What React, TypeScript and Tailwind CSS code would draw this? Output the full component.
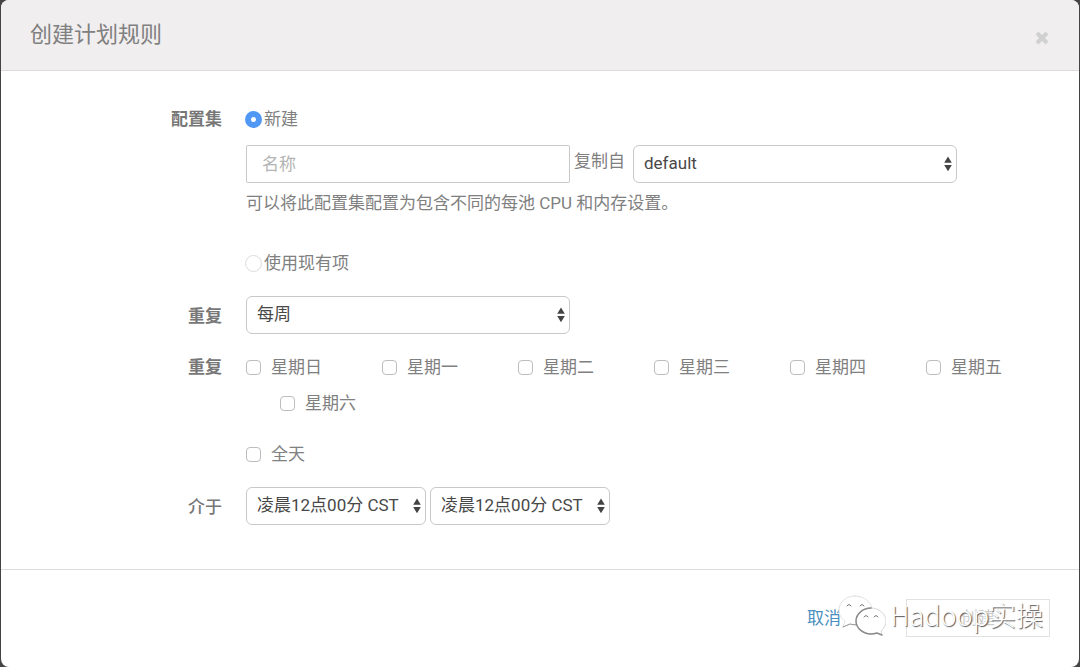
import { useState } from 'react';
import type { ReactNode } from 'react';

const weekdays = ['星期日', '星期一', '星期二', '星期三', '星期四', '星期五', '星期六'];
const times = ['凌晨12点00分 CST', '凌晨1点00分 CST', '凌晨2点00分 CST', '凌晨3点00分 CST'];

interface SelectBoxProps {
  id: string;
  label?: string;
  options: string[];
  className: string;
}

const SelectBox = ({ id, label, options, className }: SelectBoxProps) => (
  <div className={`relative ${className}`}>
    <select
      id={id}
      aria-label={label}
      className="h-[38px] w-full appearance-none rounded-md border border-[#c8c8c8] bg-white pr-6 pb-0.5 pl-2.5 text-[#484848]"
    >
      {options.map((option) => (
        <option key={option}>{option}</option>
      ))}
    </select>
    <svg
      viewBox="0 0 8 16"
      className="pointer-events-none absolute top-[11px] right-[5px] h-4 w-2 fill-[#444]"
    >
      <path d="M4 0.5 7.8 6.7H0.2zM4 15.3 7.8 9.1H0.2z" />
    </svg>
  </div>
);

interface CheckboxProps {
  id: string;
  label: string;
  className?: string;
}

const Checkbox = ({ id, label, className = '' }: CheckboxProps) => (
  <label htmlFor={id} className={`flex items-center gap-2.5 ${className}`}>
    <input
      id={id}
      type="checkbox"
      className="size-[15px] appearance-none rounded border border-[#bdbdbd] bg-white checked:bg-[#5198f5]"
    />
    {label}
  </label>
);

interface RadioProps {
  id: string;
  label: string;
  checked: boolean;
  onChange: () => void;
}

const Radio = ({ id, label, checked, onChange }: RadioProps) => (
  <label htmlFor={id} className="-ml-px flex items-center gap-0.5">
    <input
      id={id}
      type="radio"
      name="configSet"
      checked={checked}
      onChange={onChange}
      className="size-[17px] appearance-none rounded-full border border-[#dcdcdc] bg-white checked:border-6 checked:border-[#5198f5]"
    />
    {label}
  </label>
);

interface RowProps {
  label?: string;
  htmlFor?: string;
  labelClass?: string;
  children: ReactNode;
}

const Row = ({ label, htmlFor, labelClass = '', children }: RowProps) => (
  <div className="grid grid-cols-[221px_1fr] gap-6">
    <label htmlFor={htmlFor} className={`text-right text-[#777] ${labelClass}`}>
      {label}
    </label>
    <div>{children}</div>
  </div>
);

const Watermark = () => (
  <div className="pointer-events-none absolute top-6 right-9 flex items-center gap-1">
    <svg viewBox="0 0 48 42" className="h-[42px] w-12 fill-white" strokeLinecap="round">
      <path
        d="M17 2C8 2 1 8 1 16c0 5 2 8 6 11l-2 6 7-3c2 .6 4 1 6 1 9 0 16-7 16-15S26 2 17 2z"
        stroke="#e2e2e2"
      />
      <path d="M5 33l7-3c2 .6 4 .8 6 .8" fill="none" stroke="#999" />
      <path d="M9 12q2-3 4 0M22 12q2-3 4 0" fill="none" stroke="#777" />
      <path
        d="M33 14c-8 0-15 6-15 13s7 13 15 13c2 0 4-.4 6-1l5 2-1-4c3-2 5-6 5-10 0-7-7-13-15-13z"
        stroke="#d8d8d8"
      />
      <path
        d="M33 14c-8 0-15 6-15 13s7 13 15 13c2 0 4-.4 6-1l5 2"
        fill="none"
        stroke="#8a8a8a"
        strokeWidth="1.4"
      />
      <path d="M26 23q2-3 4 0M36 23q2-3 4 0" fill="none" stroke="#777" />
    </svg>
    <span className="font-['Noto_Sans_CJK_SC',sans-serif] text-[27px] leading-9 font-light text-white [text-shadow:1px_1px_1px_#555]">
      Hadoop实操
    </span>
  </div>
);

export default function App() {
  const [mode, setMode] = useState<'new' | 'existing'>('new');

  return (
    <div className="flex min-h-screen flex-col bg-[#444] px-px font-[Roboto,'Noto_Sans_CJK_SC',sans-serif] text-[17px] leading-6 text-[#808080]">
      <form className="flex grow flex-col overflow-hidden rounded-lg bg-white font-normal">
        <header className="flex items-center justify-between border-b border-[#dcdcdc] bg-[#f0eeef] pr-[30px] pl-[29px]">
          <h1 className="py-[19px] text-[22px] leading-8">创建计划规则</h1>
          <button type="button" aria-label="关闭" className="mt-1.5">
            <svg viewBox="0 0 14 14" className="size-3.5 stroke-[#d0d0d0] stroke-4">
              <path d="M2 2l10 10M12 2L2 12" />
            </svg>
          </button>
        </header>

        <div className="flex flex-col gap-[21px] pt-9 pb-11">
          <Row label="配置集" htmlFor="mode-new" labelClass="font-bold">
            <Radio id="mode-new" label="新建" checked={mode === 'new'} onChange={() => setMode('new')} />
            <div className="mt-3.5 flex">
              <input
                type="text"
                aria-label="名称"
                placeholder="名称"
                className="h-[38px] w-[324px] rounded-xs border border-[#c8c8c8] px-[15px] placeholder:text-[#b4b4b4]"
              />
              <label htmlFor="copy-from" className="mt-1 mr-2 ml-1">
                复制自
              </label>
              <SelectBox id="copy-from" options={['default']} className="w-[324px]" />
            </div>
            <p className="mt-2 mb-9">可以将此配置集配置为包含不同的每池 CPU 和内存设置。</p>
            <Radio
              id="mode-existing"
              label="使用现有项"
              checked={mode === 'existing'}
              onChange={() => setMode('existing')}
            />
          </Row>

          <Row label="重复" htmlFor="repeat" labelClass="pt-2 font-bold">
            <SelectBox id="repeat" options={['每周', '每天', '每月']} className="w-[324px]" />
          </Row>

          <Row label="重复" htmlFor="day-0" labelClass="font-bold">
            <div className="mb-1.5 grid grid-cols-[repeat(6,136px)] gap-y-3">
              {weekdays.map((day, index) => (
                <Checkbox
                  key={day}
                  id={`day-${index}`}
                  label={day}
                  className={index === 6 ? 'pl-[34px]' : ''}
                />
              ))}
            </div>
          </Row>

          <Row>
            <Checkbox id="all-day" label="全天" />
          </Row>

          <Row label="介于" htmlFor="time-from" labelClass="pt-2 font-medium">
            <div className="flex gap-1">
              <SelectBox id="time-from" options={times} className="w-[180px]" />
              <SelectBox id="time-to" label="结束时间" options={times} className="w-[180px]" />
            </div>
          </Row>
        </div>

        <footer className="relative flex grow items-start justify-end gap-[65px] border-t border-[#dcdcdc] pt-[29px] pr-[29px] pb-7">
          <a href="#" className="mt-[7px] text-[#4a8fbd]">
            取消
          </a>
          <button type="submit" disabled className="h-[38px] w-36 border border-[#e2e2e2] text-[#ccc]">
            创建
          </button>
          <Watermark />
        </footer>
      </form>
    </div>
  );
}
